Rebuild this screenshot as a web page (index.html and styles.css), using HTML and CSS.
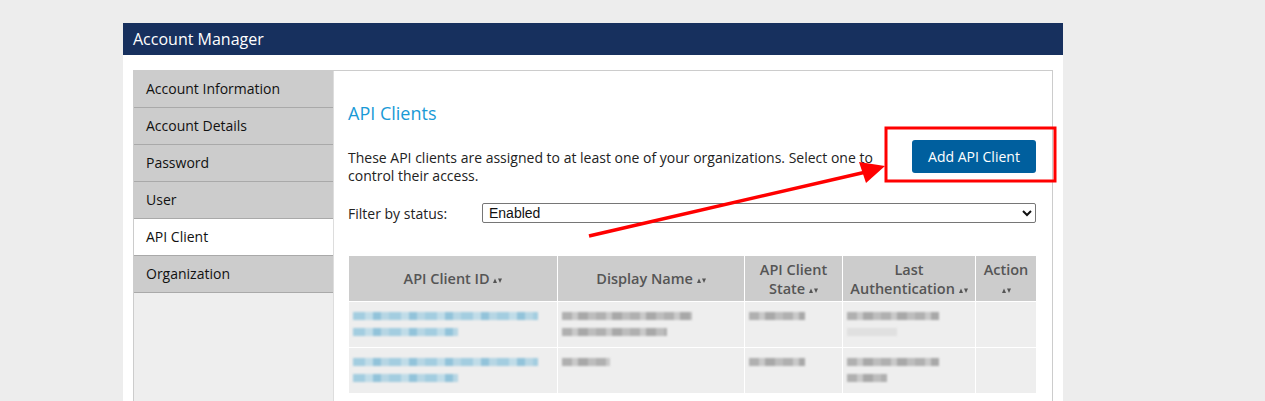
FILE: index.html
```html
<!DOCTYPE html>
<html>
<head>
<meta charset="utf-8">
<link rel="stylesheet" href="styles.css">
</head>
<body>
<div class="page">
  <div class="app-header">Account Manager</div>
  <div class="app-body">
    <div class="panel">
      <nav class="sidebar">
        <div class="nav-item">Account Information</div>
        <div class="nav-item">Account Details</div>
        <div class="nav-item">Password</div>
        <div class="nav-item">User</div>
        <div class="nav-item active">API Client</div>
        <div class="nav-item">Organization</div>
      </nav>
      <main class="content">
        <h1 class="title">API Clients</h1>
        <div class="intro">
          <p class="intro-text">These API clients are assigned to at least one of your organizations. Select one to control their access.</p>
          <button class="btn-primary">Add API Client</button>
        </div>
        <div class="filter">
          <label class="filter-label">Filter by status:</label>
          <select class="filter-select"><option>Enabled</option></select>
        </div>
        <table class="grid">
          <thead>
            <tr>
              <th class="c1">API Client ID <svg class="sort" width="9" height="7" viewBox="0 0 9 7"><path d="M0 6 L2 1.5 L4 6 Z M5 1.5 L9 1.5 L7 6 Z" fill="#555"/></svg></th>
              <th class="c2">Display Name <svg class="sort" width="9" height="7" viewBox="0 0 9 7"><path d="M0 6 L2 1.5 L4 6 Z M5 1.5 L9 1.5 L7 6 Z" fill="#555"/></svg></th>
              <th class="c3">API Client<br>State <svg class="sort" width="9" height="7" viewBox="0 0 9 7"><path d="M0 6 L2 1.5 L4 6 Z M5 1.5 L9 1.5 L7 6 Z" fill="#555"/></svg></th>
              <th class="c4">Last<br>Authentication <svg class="sort" width="9" height="7" viewBox="0 0 9 7"><path d="M0 6 L2 1.5 L4 6 Z M5 1.5 L9 1.5 L7 6 Z" fill="#555"/></svg></th>
              <th class="c5">Action<br><svg class="sort" width="9" height="7" viewBox="0 0 9 7"><path d="M0 6 L2 1.5 L4 6 Z M5 1.5 L9 1.5 L7 6 Z" fill="#555"/></svg></th>
            </tr>
          </thead>
          <tbody>
            <tr>
              <td><div class="blur"><div class="bar blue" style="width:185px"></div><div class="bar blue" style="width:105px"></div></div></td>
              <td><div class="blur"><div class="bar grey" style="width:130px"></div><div class="bar grey" style="width:105px"></div></div></td>
              <td><div class="blur"><div class="bar grey" style="width:56px"></div></div></td>
              <td><div class="blur"><div class="bar grey" style="width:92px"></div><div class="bar faint" style="width:50px"></div></div></td>
              <td></td>
            </tr>
            <tr>
              <td><div class="blur"><div class="bar blue" style="width:185px"></div><div class="bar blue" style="width:105px"></div></div></td>
              <td><div class="blur"><div class="bar grey" style="width:48px"></div></div></td>
              <td><div class="blur"><div class="bar grey" style="width:56px"></div></div></td>
              <td><div class="blur"><div class="bar grey" style="width:92px"></div><div class="bar grey" style="width:40px"></div></div></td>
              <td></td>
            </tr>
          </tbody>
        </table>
      </main>
    </div>
  </div>
</div>
<svg class="annot" width="1265" height="401" viewBox="0 0 1265 401">
  <rect x="886" y="128" width="169" height="53" fill="none" stroke="#ff0000" stroke-width="3"/>
  <line x1="589" y1="236" x2="866" y2="172" stroke="#ff0000" stroke-width="3.5"/>
  <polygon points="885,166 859,162 866,183" fill="#ff0000"/>
</svg>
</body>
</html>
```
FILE: styles.css
```css
html, body {
  margin: 0;
  padding: 0;
}
body {
  background: #ededed;
  font-family: "Open Sans", "Noto Sans", Arial, sans-serif;
  color: #222;
  position: relative;
  height: 401px;
  overflow: hidden;
}
.page {
  margin: 23px 0 0 123px;
  width: 940px;
  background: #ffffff;
  height: 378px;
}
.app-header {
  height: 32px;
  background: #17305e;
  color: #ffffff;
  font-size: 16px;
  line-height: 32px;
  padding-left: 10px;
}
.app-body {
  padding: 15px 10px 0 10px;
}
.panel {
  display: flex;
  border: 1px solid #cccccc;
  border-bottom: none;
  height: 340px;
}
.sidebar {
  width: 199px;
  flex: none;
  background: #eeeeee;
  border-right: 1px solid #dddddd;
}
.nav-item {
  height: 36px;
  line-height: 36px;
  border-bottom: 1px solid #a9a9a9;
  background: #cccccc;
  padding-left: 12px;
  font-size: 14px;
  font-weight: 500;
  color: #111;
}
.nav-item.active {
  background: #ffffff;
}
.content {
  flex: 1;
  min-width: 0;
  padding: 30px 15px 0 14px;
  background: #fff;
}
.title {
  margin: 0;
  font-size: 18px;
  font-weight: 400;
  line-height: 24px;
  color: #1a9ad6;
}
.intro {
  margin-top: 16px;
  display: flex;
  justify-content: space-between;
  align-items: flex-start;
}
.intro-text {
  margin: 8px 0 0 0;
  width: 535px;
  font-size: 14px;
  line-height: 18px;
  color: #222;
}
.btn-primary {
  background: #005f9e;
  color: #fff;
  border: none;
  border-radius: 3px;
  width: 124px;
  height: 33px;
  font-family: inherit;
  font-size: 14px;
  padding: 0;
  margin-top: -1px;
  margin-right: 1px;
}
.filter {
  margin-top: 18px;
  display: flex;
  align-items: center;
}
.filter-label {
  width: 134px;
  font-size: 14px;
  color: #222;
}
.filter-select {
  flex: 1;
  height: 20px;
  font-family: "Liberation Sans", Arial, sans-serif;
  font-size: 14px;
  border: 1px solid #767676;
  border-radius: 2px;
  background: #fff;
  color: #111;
  padding: 0 2px;
  margin-right: 1px;
}
.grid {
  margin-top: 32px;
  border-collapse: separate;
  border-spacing: 1px;
  width: 100%;
}
.grid th {
  background: #cccccc;
  color: #555;
  font-size: 14.5px;
  font-weight: 600;
  line-height: 19px;
  height: 45px;
  padding: 0 2px;
  vertical-align: middle;
  text-align: center;
}
.grid th.c1 { width: 204px; }
.grid th.c2 { width: 182px; }
.grid th.c3 { width: 93px; }
.grid th.c4 { width: 128px; }
.grid th.c5 { width: 56px; }
.sort {
  vertical-align: 0;
}
.grid td {
  background: #eeeeee;
  height: 45px;
  vertical-align: top;
  padding: 0;
}
.blur {
  padding: 10px 4px 0 4px;
  filter: blur(0.8px);
}
.bar {
  height: 8px;
  margin-bottom: 8px;
}
.bar.blue {
  background: repeating-linear-gradient(90deg, #a3cde0 0 12px, #c0dce8 12px 20px, #92c3da 20px 28px, #b6d6e4 28px 36px);
}
.bar.grey {
  background: repeating-linear-gradient(90deg, #b0b0b0 0 10px, #c9c9c9 10px 16px, #a8a8a8 16px 26px, #bdbdbd 26px 34px);
}
.bar.faint {
  background: #e0e0e0;
}
.annot {
  position: absolute;
  left: 0;
  top: 0;
  pointer-events: none;
}
```
